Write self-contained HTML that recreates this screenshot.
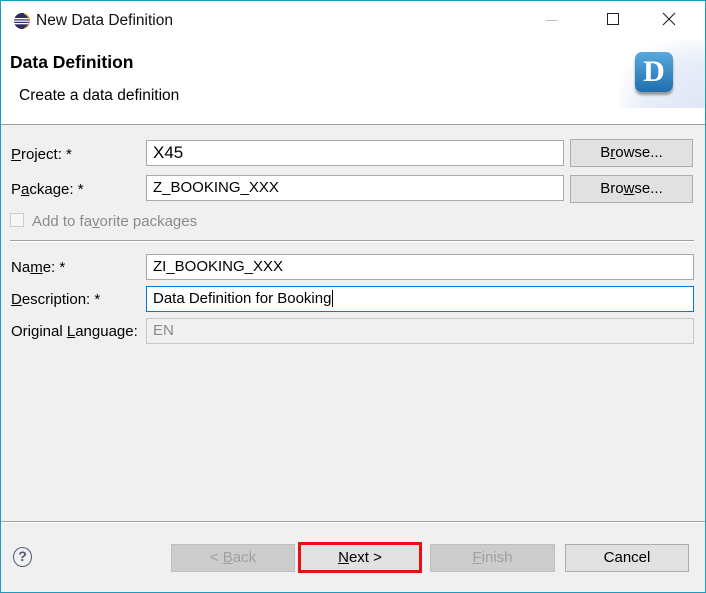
<!DOCTYPE html>
<html><head><style>
*{margin:0;padding:0;box-sizing:border-box}
body{width:706px;height:593px;position:relative;background:#f0f0f0;font-family:"Liberation Sans",sans-serif;font-size:15px;color:#000;overflow:hidden}
.a{position:absolute}
.frame{left:0;top:0;width:706px;height:593px;border:1px solid #1c9ac0;z-index:10;pointer-events:none}
.inp{position:absolute;background:#fff;border:1px solid #a9a9a9;height:26px;padding-left:6px;line-height:24px;font-size:15px}
.btn{position:absolute;background:#e1e1e1;border:1px solid #adadad;height:28px;text-align:center;line-height:26px;font-size:15px}
.lbl{position:absolute;font-size:15px;line-height:17px}
.dis{color:#a0a0a0;background:#cccccc;border-color:#bfbfbf}
u{text-decoration:underline}
</style></head><body>
<div class="a frame"></div>
<div class="a" style="left:0;top:0;width:706px;height:125px;background:#fff"></div>
<div class="a" style="left:0;top:124px;width:706px;height:1px;background:#a0a0a0"></div>
<svg class="a" style="left:13px;top:12px" width="18" height="18" viewBox="0 0 18 18"><circle cx="9" cy="9" r="8" fill="#2c2d5e"/><rect x="1" y="6" width="16" height="1.3" fill="#fff"/><rect x="1" y="8.5" width="16" height="1.3" fill="#fff"/><rect x="1" y="11" width="16" height="1.3" fill="#fff"/><path d="M11 1.5 A8 8 0 0 1 11 16.5" stroke="#f0a030" stroke-width="1" fill="none"/></svg>
<div class="lbl" style="left:36px;top:12px;font-size:15.5px;color:#111">New Data Definition</div>
<div class="a" style="left:546px;top:20px;width:11px;height:1px;background:#bbb"></div>
<div class="a" style="left:607px;top:13px;width:12px;height:12px;border:1px solid #222"></div>
<svg class="a" style="left:662px;top:12px" width="14" height="14"><path d="M1 1L13 13M13 1L1 13" stroke="#222" stroke-width="1.1"/></svg>
<div class="lbl" style="left:10px;top:52px;font-size:17.5px;font-weight:bold;line-height:20px">Data Definition</div>
<div class="lbl" style="left:19px;top:87px;font-size:15.5px">Create a data definition</div>
<div class="a" style="left:620px;top:40px;width:86px;height:68px;background:radial-gradient(ellipse at 100% 100%,#dfe6f5 0%,#e8eef8 50%,#fff 80%)"></div>
<div class="a" style="left:635px;top:52px;width:38px;height:40px;border-radius:7px;background:linear-gradient(#5aa8dc,#1e6fb0);color:#fff;font-family:'Liberation Serif',serif;font-weight:bold;font-size:30px;text-align:center;line-height:40px;box-shadow:0 3px 2px #999">D</div>

<div class="lbl" style="left:11px;top:146px"><u>P</u>roject: *</div>
<div class="inp" style="left:146px;top:140px;width:418px;font-size:17px">X45</div>
<div class="btn" style="left:570px;top:139px;width:123px">B<u>r</u>owse...</div>
<div class="lbl" style="left:11px;top:181px">P<u>a</u>ckage: *</div>
<div class="inp" style="left:146px;top:175px;width:418px">Z_BOOKING_XXX</div>
<div class="btn" style="left:570px;top:175px;width:123px">Bro<u>w</u>se...</div>
<div class="a" style="left:10px;top:213px;width:14px;height:14px;border:1px solid #ccc;background:#f6f6f6"></div>
<div class="lbl" style="left:32px;top:213px;color:#8a8a8a">Add to fa<u>v</u>orite packages</div>
<div class="a" style="left:10px;top:240px;width:684px;height:2px;border-top:1px solid #a0a0a0;border-bottom:1px solid #fff"></div>
<div class="lbl" style="left:11px;top:259px">Na<u>m</u>e: *</div>
<div class="inp" style="left:146px;top:254px;width:548px">ZI_BOOKING_XXX</div>
<div class="lbl" style="left:11px;top:291px"><u>D</u>escription: *</div>
<div class="inp" style="left:146px;top:286px;width:548px;border-color:#0078d7">Data Definition for Booking<span style="border-left:1px solid #000;margin-left:1px"></span></div>
<div class="lbl" style="left:11px;top:323px">Original <u>L</u>anguage:</div>
<div class="inp" style="left:146px;top:318px;width:548px;background:#f0f0f0;border-color:#c8c8c8;color:#8a8a8a">EN</div>

<div class="a" style="left:0;top:521px;width:706px;height:2px;border-top:1px solid #a0a0a0;border-bottom:1px solid #fff"></div>
<div class="a" style="left:13px;top:547px;width:19px;height:20px;border:1.5px solid #4a5a78;border-radius:50%;text-align:center;line-height:17px;font-size:14px;color:#4a5a78;font-weight:bold">?</div>
<div class="btn dis" style="left:171px;top:544px;width:124px">&lt; <u>B</u>ack</div>
<div class="btn" style="left:298px;top:542px;width:124px;height:31px;border:3px solid #e81010;line-height:25px"><u>N</u>ext &gt;</div>
<div class="btn dis" style="left:430px;top:544px;width:125px"><u>F</u>inish</div>
<div class="btn" style="left:565px;top:544px;width:124px">Cancel</div>
</body></html>
